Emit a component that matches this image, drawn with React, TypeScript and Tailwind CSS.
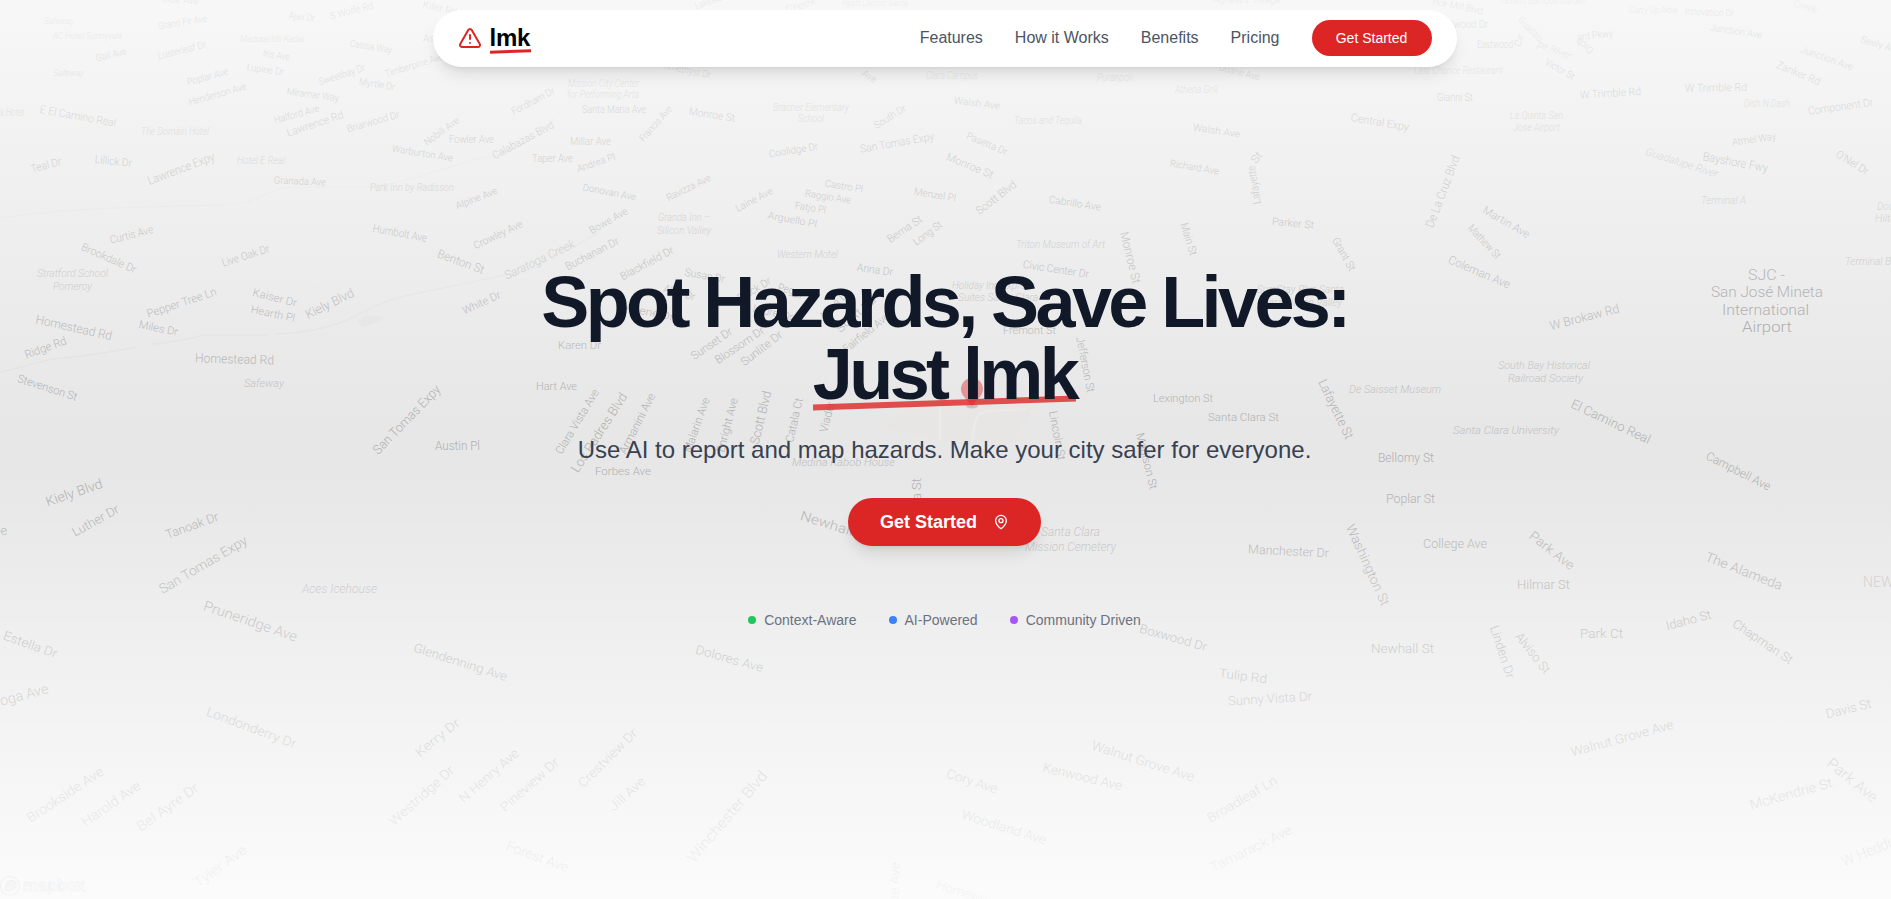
import React from "react";
import { MapPin, TriangleAlert } from "lucide-react";

type Kind = "road" | "place" | "airport";
/** text, start x, start y, end x, end y (along the middle line), font size, kind */
type Label = [string, number, number, number, number, number?, Kind?];

const roads: Label[] = [
  ["Blue Ave", 162, -2, 199, 1, 10],
  ["Gail Ave", 96, 58, 126, 51, 10],
  ["Grand Fir Ave", 158, 26, 207, 18, 10],
  ["Lusterleaf Dr", 158, 56, 206, 44, 10],
  ["Poplar Ave", 187, 82, 228, 71, 10],
  ["Henderson Ave", 189, 102, 246, 86, 10],
  ["Ajax Dr", 289, 15, 315, 18, 10],
  ["S Wolfe Rd", 330, 16, 373, 5, 10],
  ["Kifer Rd", 423, 4, 457, 12, 10],
  ["Iris Ave", 263, 53, 290, 57, 10],
  ["Lupine Dr", 247, 67, 284, 72, 10],
  ["Cassia Way", 350, 43, 392, 50, 10],
  ["Aster Ave", 423, 38, 464, 38, 10],
  ["Sweetbay Dr", 319, 82, 365, 67, 10],
  ["Timberpine Ave", 385, 74, 443, 56, 10],
  ["Myrtle Dr", 359, 81, 395, 87, 10],
  ["Miramar Way", 287, 91, 339, 98, 10],
  ["Halford Ave", 274, 120, 319, 108, 10],
  ["Lawrence Rd", 287, 133, 343, 114, 11],
  ["Briarwood Dr", 347, 129, 399, 114, 10],
  ["Nobili Ave", 425, 143, 458, 119, 10],
  ["Fowler Ave", 449, 139, 494, 139, 10],
  ["Warburton Ave", 392, 148, 453, 158, 10],
  ["E El Camino Real", 40, 109, 116, 123, 11],
  ["Teal Dr", 31, 169, 61, 161, 11],
  ["Lillick Dr", 95, 159, 132, 163, 11],
  ["Lawrence Expy", 148, 181, 214, 156, 12],
  ["Granada Ave", 274, 180, 326, 182, 10],
  ["Curtis Ave", 110, 240, 153, 229, 11],
  ["Brookdale Dr", 82, 246, 136, 270, 11],
  ["Live Oak Dr", 222, 263, 269, 248, 11],
  ["Humbolt Ave", 373, 228, 427, 238, 11],
  ["Benton St", 438, 253, 484, 270, 12],
  ["Fordham Dr", 512, 112, 554, 90, 10],
  ["Santa Maria Ave", 582, 109, 646, 109, 10],
  ["Francis Ave", 641, 140, 670, 107, 10],
  ["Monroe St", 689, 111, 735, 118, 11],
  ["South Dr", 875, 126, 905, 107, 10],
  ["Calabazas Blvd", 493, 156, 553, 124, 11],
  ["Millar Ave", 570, 141, 611, 141, 10],
  ["Taper Ave", 532, 158, 573, 158, 10],
  ["Andrea Pl", 577, 169, 615, 156, 10],
  ["Coolidge Dr", 769, 154, 818, 146, 10],
  ["San Tomas Expy", 860, 149, 934, 136, 11],
  ["Alpine Ave", 456, 206, 497, 190, 10],
  ["Donovan Ave", 583, 187, 636, 197, 10],
  ["Ravizza Ave", 667, 198, 710, 177, 10],
  ["Laine Ave", 736, 209, 772, 190, 10],
  ["Castro Pl", 825, 183, 863, 189, 10],
  ["Raggio Ave", 805, 193, 851, 200, 10],
  ["Fatjo Pl", 795, 205, 826, 210, 10],
  ["Arguello Pl", 768, 215, 817, 224, 10],
  ["Crowley Ave", 474, 246, 522, 223, 10.5],
  ["Bowe Ave", 590, 231, 627, 210, 10.5],
  ["Buchanan Dr", 566, 267, 618, 240, 11],
  ["Blackfield Dr", 621, 277, 673, 249, 11],
  ["Anna Dr", 857, 267, 893, 272, 11],
  ["Susan Dr", 685, 272, 725, 279, 11],
  ["White Dr", 463, 311, 500, 294, 11],
  ["Amethyst Dr", 664, 65, 711, 75, 10],
  ["Ave", 863, 72, 876, 80, 10],
  ["Berna St", 888, 240, 921, 218, 11],
  ["Alice Dr", 664, 288, 695, 297, 11],
  ["Arlene Dr", 625, 307, 674, 317, 11],
  ["Black Dr", 738, 299, 770, 280, 11],
  ["Peggy", 778, 287, 804, 293, 11],
  ["Laurel Dr", 753, 308, 793, 317, 11],
  ["Alma Dr", 821, 318, 848, 291, 11],
  ["Scott Rd", 838, 330, 874, 298, 11],
  ["Fairfield Ave", 844, 350, 888, 315, 11],
  ["Karen Dr", 558, 345, 601, 345, 11],
  ["Sunset Dr", 692, 357, 731, 330, 11.5],
  ["Blossom Dr", 716, 361, 763, 329, 11.5],
  ["Sunlite Dr", 742, 363, 781, 333, 11.5],
  ["Hart Ave", 536, 386, 577, 386, 11.5],
  ["Clara Vista Ave", 558, 453, 596, 390, 11.5],
  ["Los Padres Blvd", 574, 471, 624, 394, 13],
  ["Armanini Ave", 622, 453, 652, 394, 11.5],
  ["Malarin Ave", 687, 452, 706, 398, 11.5],
  ["Enright Ave", 720, 452, 734, 398, 11.5],
  ["Scott Blvd", 754, 444, 767, 391, 13],
  ["Catala Ct", 789, 442, 799, 398, 11.5],
  ["Viader", 823, 432, 831, 402, 11.5],
  ["Forbes Ave", 595, 471, 651, 471, 11.5],
  ["a St", 917, 500, 917, 478, 12],
  ["Newhall St", 801, 515, 870, 537, 13],
  ["Civic Center Dr", 1023, 264, 1089, 274, 11],
  ["Fremont St", 1003, 330, 1056, 330, 11],
  ["Jefferson St", 1080, 337, 1091, 392, 11.5],
  ["Lincoln St", 1053, 411, 1062, 460, 11.5],
  ["Madison St", 1140, 433, 1154, 489, 11.5],
  ["Lexington St", 1153, 398, 1213, 398, 11.5],
  ["Santa Clara St", 1208, 417, 1279, 417, 11.5],
  ["Lafayette St", 1322, 380, 1350, 438, 13],
  ["Duane Ave", 1219, 67, 1260, 77, 10],
  ["Walsh Ave", 954, 100, 1000, 106, 10],
  ["Pasetta Dr", 967, 135, 1007, 152, 10],
  ["Walsh Ave", 1193, 127, 1240, 134, 10],
  ["Central Expy", 1351, 117, 1409, 127, 11],
  ["Monroe St", 947, 156, 993, 175, 11],
  ["Richard Ave", 1170, 163, 1219, 171, 10],
  ["Lafayette", 1257, 204, 1251, 166, 11],
  ["St", 1253, 162, 1260, 153, 11],
  ["Menzel Pl", 914, 191, 956, 198, 10],
  ["Scott Blvd", 977, 212, 1015, 183, 11],
  ["Cabrillo Ave", 1049, 199, 1101, 207, 10.5],
  ["Parker St", 1272, 221, 1314, 225, 10.5],
  ["Long St", 914, 243, 941, 223, 10.5],
  ["Monroe St", 1124, 232, 1137, 283, 12],
  ["Main St", 1184, 223, 1194, 255, 11],
  ["Grant St", 1335, 238, 1353, 270, 11],
  ["Lakeside Dr", 695, 6, 735, -8, 10],
  ["rick Mill Blvd", 1433, 1, 1483, 11, 10],
  ["Wellwood Dr", 1436, 24, 1488, 24, 10],
  ["Innovation Dr", 1685, 11, 1734, 13, 10],
  ["Eastwood", 1477, 44, 1513, 44, 10],
  ["Cir", 1517, 46, 1521, 35, 10],
  ["ard Pkwy", 1577, 37, 1613, 33, 10],
  ["Orch", 1592, 52, 1577, 40, 10],
  ["Junction Ave", 1710, 27, 1762, 35, 10],
  ["Seely Ave", 1861, 39, 1900, 50, 10],
  ["Junction Ave", 1801, 49, 1853, 67, 10],
  ["Zanker Rd", 1777, 64, 1820, 82, 11],
  ["Victor St", 1546, 61, 1574, 77, 10],
  ["W Trimble Rd", 1580, 95, 1641, 91, 11],
  ["W Trimble Rd", 1685, 88, 1747, 87, 11],
  ["Gianni St", 1437, 97, 1473, 97, 10],
  ["Component Dr", 1808, 111, 1873, 102, 11],
  ["Atmel Way", 1732, 142, 1776, 136, 10],
  ["Bayshore Fwy", 1703, 156, 1768, 168, 12],
  ["O'Nel Dr", 1837, 153, 1868, 172, 11],
  ["De La Cruz Blvd", 1429, 227, 1456, 156, 12],
  ["Martin Ave", 1484, 209, 1529, 235, 11],
  ["Mathew St", 1470, 226, 1499, 257, 11],
  ["Coleman Ave", 1449, 259, 1510, 285, 12],
  ["El Camino Real", 1572, 403, 1650, 440, 13],
  ["W Brokaw Rd", 1550, 326, 1619, 308, 12.5],
  ["Campbell Ave", 1707, 455, 1770, 487, 12],
  ["Bellomy St", 1378, 458, 1434, 458, 12],
  ["Poplar St", 1386, 499, 1435, 499, 12],
  ["Washington St", 1350, 525, 1386, 605, 13],
  ["College Ave", 1423, 544, 1487, 544, 12],
  ["Manchester Dr", 1248, 549, 1329, 553, 12.5],
  ["Park Ave", 1531, 534, 1573, 567, 13],
  ["The Alameda", 1706, 556, 1782, 586, 13.5],
  ["Hilmar St", 1517, 585, 1570, 585, 12],
  ["Idaho St", 1666, 626, 1711, 614, 12.5],
  ["Chapman St", 1734, 622, 1792, 661, 12.5],
  ["Park Ct", 1580, 634, 1623, 634, 12.5],
  ["Linden Dr", 1494, 626, 1511, 678, 12.5],
  ["Alviso St", 1518, 634, 1548, 672, 12.5],
  ["Newhall St", 1371, 649, 1434, 649, 12.5],
  ["Boxwood Dr", 1140, 628, 1207, 647, 12.5],
  ["Tulip Rd", 1219, 673, 1267, 679, 12.5],
  ["Sunny Vista Dr", 1228, 701, 1312, 696, 12.5],
  ["Davis St", 1826, 714, 1871, 703, 13],
  ["Walnut Grove Ave", 1571, 752, 1673, 724, 13],
  ["Walnut Grove Ave", 1092, 745, 1194, 777, 13],
  ["Kenwood Ave", 1043, 767, 1122, 786, 13],
  ["Cory Ave", 947, 773, 997, 789, 13],
  ["Broadleaf Ln", 1208, 819, 1276, 779, 13],
  ["McKendrie St", 1750, 805, 1832, 782, 13.5],
  ["Park Ave", 1829, 761, 1876, 799, 15],
  ["Woodland Ave", 962, 814, 1046, 840, 13],
  ["Tamarack Ave", 1211, 868, 1291, 829, 13],
  ["W Hedding", 1842, 862, 1905, 836, 15],
  ["Homewood Ave", 937, 884, 1025, 912, 13],
  ["Monroe Ave", 893, 935, 895, 862, 13],
  ["Pepper Tree Ln", 147, 314, 216, 291, 11.5],
  ["Kaiser Dr", 253, 292, 297, 303, 11],
  ["Hearth Pl", 251, 309, 295, 318, 11],
  ["Kiely Blvd", 306, 315, 353, 292, 12.5],
  ["Homestead Rd", 36, 319, 112, 336, 12.5],
  ["Miles Dr", 139, 324, 178, 332, 11],
  ["Ridge Rd", 25, 355, 66, 340, 11.5],
  ["Stevenson St", 18, 378, 77, 397, 11.5],
  ["Homestead Rd", 195, 358, 274, 360, 12.5],
  ["San Tomas Expy", 375, 452, 438, 387, 13],
  ["Austin Pl", 435, 446, 480, 446, 12],
  ["Kiely Blvd", 46, 502, 102, 483, 13.5],
  ["Luther Dr", 73, 533, 118, 508, 12.5],
  ["Tanoak Dr", 166, 535, 218, 516, 12.5],
  ["San Tomas Expy", 160, 590, 246, 539, 13.5],
  ["ve", -6, 532, 7, 530, 12.5],
  ["Pruneridge Ave", 204, 605, 297, 637, 14],
  ["Estella Dr", 4, 635, 57, 654, 12.5],
  ["oga Ave", 0, 701, 48, 688, 14],
  ["Glendenning Ave", 414, 647, 507, 677, 12.5],
  ["Dolores Ave", 696, 649, 763, 668, 12.5],
  ["Londonderry Dr", 207, 711, 296, 744, 13],
  ["Kerry Dr", 417, 754, 458, 721, 13],
  ["Westridge Dr", 391, 823, 452, 768, 13],
  ["N Henry Ave", 461, 800, 517, 751, 13],
  ["Pineview Dr", 502, 809, 557, 760, 13],
  ["Crestview Dr", 580, 785, 635, 731, 13],
  ["Jill Ave", 611, 808, 643, 779, 13],
  ["Winchester Blvd", 690, 860, 764, 773, 15],
  ["Brookside Ave", 28, 819, 102, 770, 13.5],
  ["Harold Ave", 83, 823, 139, 784, 13.5],
  ["Bel Ayre Dr", 138, 828, 197, 786, 13.5],
  ["Forest Ave", 507, 845, 568, 868, 13.5],
  ["Tyler Ave", 195, 884, 245, 848, 13.5],
];

const places: Label[] = [
  ["Safeway", 44, 21, 74, 21, 9.5],
  ["AC Hotel Sunnyvale", 53, 36, 122, 36, 9.5],
  ["Safeway", 53, 73, 84, 73, 9.5],
  ["Madurai Idli Kadai", 240, 39, 304, 39, 9.5],
  ["s Hotel", 0, 112, 24, 112, 10],
  ["The Domain Hotel", 141, 131, 209, 131, 10],
  ["Hotel E Real", 237, 160, 285, 160, 10],
  ["Park Inn by Radisson", 370, 187, 454, 187, 10.5],
  ["Stratford School", 37, 273, 108, 273, 11],
  ["Pomeroy", 53, 286, 92, 286, 11],
  ["Mission City Center", 568, 83, 639, 83, 10],
  ["for Performing Arts", 567, 94, 639, 94, 10],
  ["Bracher Elementary", 773, 107, 849, 107, 10],
  ["School", 798, 118, 824, 118, 10],
  ["Granda Inn –", 658, 217, 710, 217, 10.5],
  ["Silicon Valley", 657, 230, 711, 230, 10.5],
  ["Western Motel", 777, 254, 838, 254, 10.5],
  ["Medina Kabob House", 792, 462, 895, 462, 11.5],
  ["Holiday Inn Express", 952, 285, 1035, 285, 11],
  ["Suites Santa Clara", 958, 297, 1038, 297, 11],
  ["De Saisset Museum", 1349, 389, 1441, 389, 11.5],
  ["SureStay Plus Santa", 1257, 289, 1344, 289, 11],
  ["Clara Silicon Valley", 1260, 302, 1342, 302, 11],
  ["Santa Clara", 1041, 532, 1100, 532, 12.5],
  ["Mission Cemetery", 1025, 547, 1116, 547, 12.5],
  ["Hyatt Centric Santa", 842, 3, 908, 3, 9.5],
  ["Clara Campus", 926, 75, 978, 75, 10],
  ["Puranpoli", 1097, 77, 1133, 77, 10],
  ["Athena Grill", 1175, 89, 1218, 89, 10],
  ["Tacos and Tequila", 1014, 120, 1082, 120, 10],
  ["Triton Museum of Art", 1016, 244, 1105, 244, 11],
  ["Agnew's Village", 1213, 0, 1281, 0, 9.5],
  ["Inchin's Bamboo Garden", 1500, 1, 1586, 1, 9.5],
  ["Curry Up Now", 1629, 10, 1678, 10, 9.5],
  ["Creek", 1794, 3, 1817, 10, 10],
  ["Creek", 785, 10, 816, 0, 10],
  ["Guadalu", 1520, 18, 1542, 40, 10.5],
  ["pe River", 1538, 43, 1571, 56, 10.5],
  ["Last Chance Restaurant", 1414, 70, 1503, 70, 10],
  ["Dish N Dash", 1744, 103, 1790, 103, 10],
  ["La Quinta San", 1510, 115, 1563, 115, 10],
  ["Jose Airport", 1513, 127, 1560, 127, 10],
  ["Guadalupe River", 1646, 151, 1718, 174, 11],
  ["Saratoga Creek", 505, 276, 574, 243, 12],
  ["Terminal A", 1701, 200, 1746, 200, 10.5],
  ["DoubleTree", 1877, 206, 1925, 206, 10.5],
  ["Hilton San", 1875, 218, 1922, 218, 10.5],
  ["Terminal B", 1845, 261, 1891, 261, 11],
  ["South Bay Historical", 1498, 365, 1590, 365, 11.5],
  ["Railroad Society", 1508, 378, 1583, 378, 11.5],
  ["Santa Clara University", 1453, 430, 1559, 430, 11.5],
  ["Safeway", 244, 383, 284, 383, 11.5],
  ["Aces Icehouse", 302, 589, 377, 589, 12.5],
];

const airport: Label[] = [
  ["SJC -", 1748, 275, 1785, 275, 15],
  ["San José Mineta", 1711, 292, 1823, 292, 15],
  ["International", 1722, 310, 1809, 310, 15],
  ["Airport", 1742, 327, 1792, 327, 15],
];

const kindClass: Record<Kind, string> = {
  road: "fill-[#acacac]",
  place: "fill-[#bcbcbc] italic",
  airport: "fill-[#9c9c9c]",
};

function MapLabel({ label, kind }: { label: Label; kind: Kind }) {
  const [text, x1, y1, x2, y2, size = 11] = label;
  const length = Math.hypot(x2 - x1, y2 - y1);
  const angle = (Math.atan2(y2 - y1, x2 - x1) * 180) / Math.PI;
  return (
    <text
      transform={`translate(${x1} ${y1}) rotate(${angle})`}
      y={size * 0.35}
      fontSize={size}
      textLength={length}
      lengthAdjust="spacingAndGlyphs"
      className={kindClass[kind]}
    >
      {text}
    </text>
  );
}

function MapBackdrop() {
  return (
    <div aria-hidden="true" className="pointer-events-none absolute inset-0 -z-10 bg-[#e6e6e6]">
      <svg
        width="1891"
        height="899"
        viewBox="0 0 1891 899"
        className="block font-['Roboto',sans-serif] font-light"
      >
        <g fill="none" stroke="#e0e0e0" strokeWidth="1.5">
          <path d="M0 372C20 369 38 361 55 359S105 354 135 347M152 344C175 342 190 339 204 335H268M276 334C335 331 350 318 375 306S440 290 505 275" />
          <path d="M0 218C80 206 170 207 220 205S260 187 300 187H370C410 182 440 168 490 156S550 120 575 98" strokeWidth="1" />
          <path d="M575 246L600 232" />
        </g>
        <path d="M357 321l10-6 18 2-8 6-14 4z M311 287l9-3-4 3z" fill="#e1e1e1" />
        <path d="M881 427L910 405L1035 405L1023 425L1010 444L940 441Z" fill="#e7e5e3" />
        <path d="M972 442L975 422Q978 411 990 411L1026 409M940 405V440" fill="none" stroke="#eaeaea" strokeWidth="2" />
        <ellipse cx="972" cy="406" rx="6" ry="2.5" fill="#c9bcbc" />
        <path d="M972 407C969 400 961 397 961 389a11 11 0 0 1 22 0C983 397 975 400 972 407Z" fill="#e08a8a" />
        <circle cx="972" cy="389" r="4" fill="#e6c4c4" />
        {roads.map((l, i) => (
          <MapLabel key={i} label={l} kind="road" />
        ))}
        {places.map((l, i) => (
          <MapLabel key={i} label={l} kind="place" />
        ))}
        {airport.map((l, i) => (
          <MapLabel key={i} label={l} kind="airport" />
        ))}
        <text x="1863" y="587" fontSize="14" className="fill-[#c4c4c4]">
          NEWHALL
        </text>
        <g fill="none" stroke="#b4b4b4" strokeWidth="1.2">
          <circle cx="10" cy="886" r="9.5" />
          <path d="M5.5 890.5c-1-5 1-10 6-10 5 0 6 5 3 8-2.5 2.500-6 2.500-9 2z" fill="#c8c8c8" />
          <text x="23" y="891" fontSize="17" fontWeight="700" textLength="62" strokeWidth="0.9">
            mapbox
          </text>
        </g>
      </svg>
      <div className="absolute inset-0 bg-[linear-gradient(to_bottom,rgba(255,255,255,0.7)_0%,rgba(255,255,255,0.34)_25%,rgba(255,255,255,0.06)_46%,rgba(255,255,255,0.04)_50%,rgba(255,255,255,0.06)_54%,rgba(255,255,255,0.4)_72%,rgba(255,255,255,0.86)_100%)]" />
    </div>
  );
}

function Header() {
  return (
    <header className="flex justify-center pt-[9.5px]">
      <nav className="flex h-[57px] w-full max-w-5xl items-center justify-between rounded-full bg-white pr-[25px] pl-6 shadow-lg">
        <a href="#" className="flex items-center gap-2 pl-px">
          <TriangleAlert className="size-6 text-[#dc2626]" strokeWidth={2} />
          <span className="relative text-2xl leading-8 font-bold tracking-[-0.01em] text-black">
            lmk
            <span className="absolute bottom-px left-0 h-[3px] w-full -skew-y-2 bg-[#dc2626]" />
          </span>
        </a>
        <div className="flex items-center gap-8 text-base text-[#4b5563]">
          <a href="#features">Features</a>
          <a href="#how">How it Works</a>
          <a href="#benefits">Benefits</a>
          <a href="#pricing">Pricing</a>
          <a
            href="#start"
            className="flex h-9 w-[120px] items-center justify-center rounded-full bg-[#dc2626] text-sm font-medium text-white"
          >
            Get Started
          </a>
        </div>
      </nav>
    </header>
  );
}

const traits = [
  { name: "Context-Aware", dot: "bg-[#22c55e]" },
  { name: "AI-Powered", dot: "bg-[#3b82f6]" },
  { name: "Community Driven", dot: "bg-[#a855f7]" },
];

export default function App() {
  return (
    <div className="relative isolate h-[899px] overflow-hidden pr-[2px] font-['Liberation_Sans',Arial,sans-serif]">
      <MapBackdrop />
      <Header />
      <main className="flex flex-col items-center pt-[199px] text-center">
        <h1 className="text-7xl leading-[72px] font-bold tracking-tighter text-[#111827]">
          Spot Hazards, Save Lives:
          <br />
          <span className="relative isolate inline-block">
            Just lmk
            <span className="absolute bottom-1 left-0 -z-10 h-1.5 w-full -skew-y-2 bg-[#dc2626]/80" />
          </span>
        </h1>
        <p className="mt-6 text-2xl leading-8 text-[#374151]">
          Use AI to report and map hazards. Make your city safer for everyone.
        </p>
        <button className="mt-8 flex h-12 items-center gap-4 rounded-full bg-[#dc2626] px-8 text-lg font-semibold text-white shadow-lg">
          Get Started
          <MapPin className="size-4" />
        </button>
        <ul className="mt-16 flex items-center gap-8 text-sm text-[#6b7280]">
          {traits.map((t) => (
            <li key={t.name} className="flex items-center gap-2">
              <span className={`size-2 rounded-full ${t.dot}`} />
              {t.name}
            </li>
          ))}
        </ul>
      </main>
    </div>
  );
}
